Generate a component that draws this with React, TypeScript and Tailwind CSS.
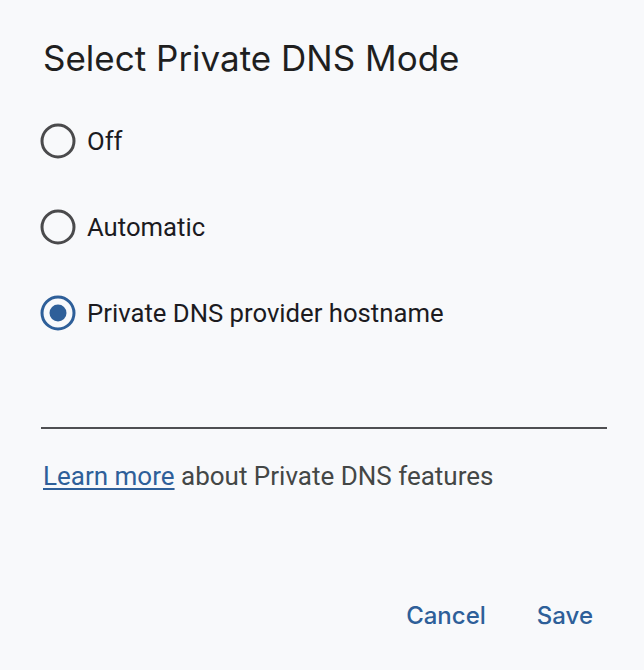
import { useState } from "react";

const options = ["Off", "Automatic", "Private DNS provider hostname"];

const Radio = ({ checked }: { checked: boolean }) => (
  <svg width="36" height="36" viewBox="0 0 36 36" className="shrink-0">
    <circle cx="18" cy="18" r="16" fill="none" stroke={checked ? "#2e5f99" : "#4a4a4c"} strokeWidth="3" />
    {checked && <circle cx="18" cy="18" r="8.5" fill="#2e5f99" />}
  </svg>
);

export default function App() {
  const [mode, setMode] = useState(2);
  const [host, setHost] = useState("");

  return (
    <div className="w-[644px] h-[670px] bg-[#f8f9fb] overflow-hidden font-['Roboto',sans-serif]">
      <div className="flex flex-col pl-[40px] pr-[37px] pt-[38px]">
        <h1 className="font-['Inter',sans-serif] text-[35px] leading-[40px] text-[#1f1f1f] pl-[3px]">Select Private DNS Mode</h1>

        <div className="flex flex-col gap-[50px] mt-[45px]">
          {options.map((o, i) => (
            <button
              key={o}
              className="flex items-center gap-[11px] h-[36px] text-left"
              onClick={() => setMode(i)}
            >
              <Radio checked={mode === i} />
              <span className="text-[25.7px] leading-[30px] text-[#1c1b1f]">{o}</span>
            </button>
          ))}
        </div>

        {/* hostname field */}
        <input
          value={host}
          onChange={e => setHost(e.target.value)}
          className="mt-[57px] ml-[1px] h-[41px] bg-transparent border-b-2 border-[#4f4f52] outline-none text-[26px]"
        />

        <p className="mt-[32px] pl-[3px] text-[26px] leading-[30px] text-[#444746]">
          <a href="#" className="text-[#2e5f99] underline underline-offset-[3px] decoration-2">Learn more</a> about Private DNS features
        </p>

        <div className="flex justify-end gap-[51px] mt-[110px] pr-[14px] font-['Inter',sans-serif]">
          <button className="text-[24px] leading-[30px] font-medium text-[#2e5f99]">Cancel</button>
          <button className="text-[24px] leading-[30px] font-medium text-[#2e5f99]">Save</button>
        </div>
      </div>
    </div>
  );
}
